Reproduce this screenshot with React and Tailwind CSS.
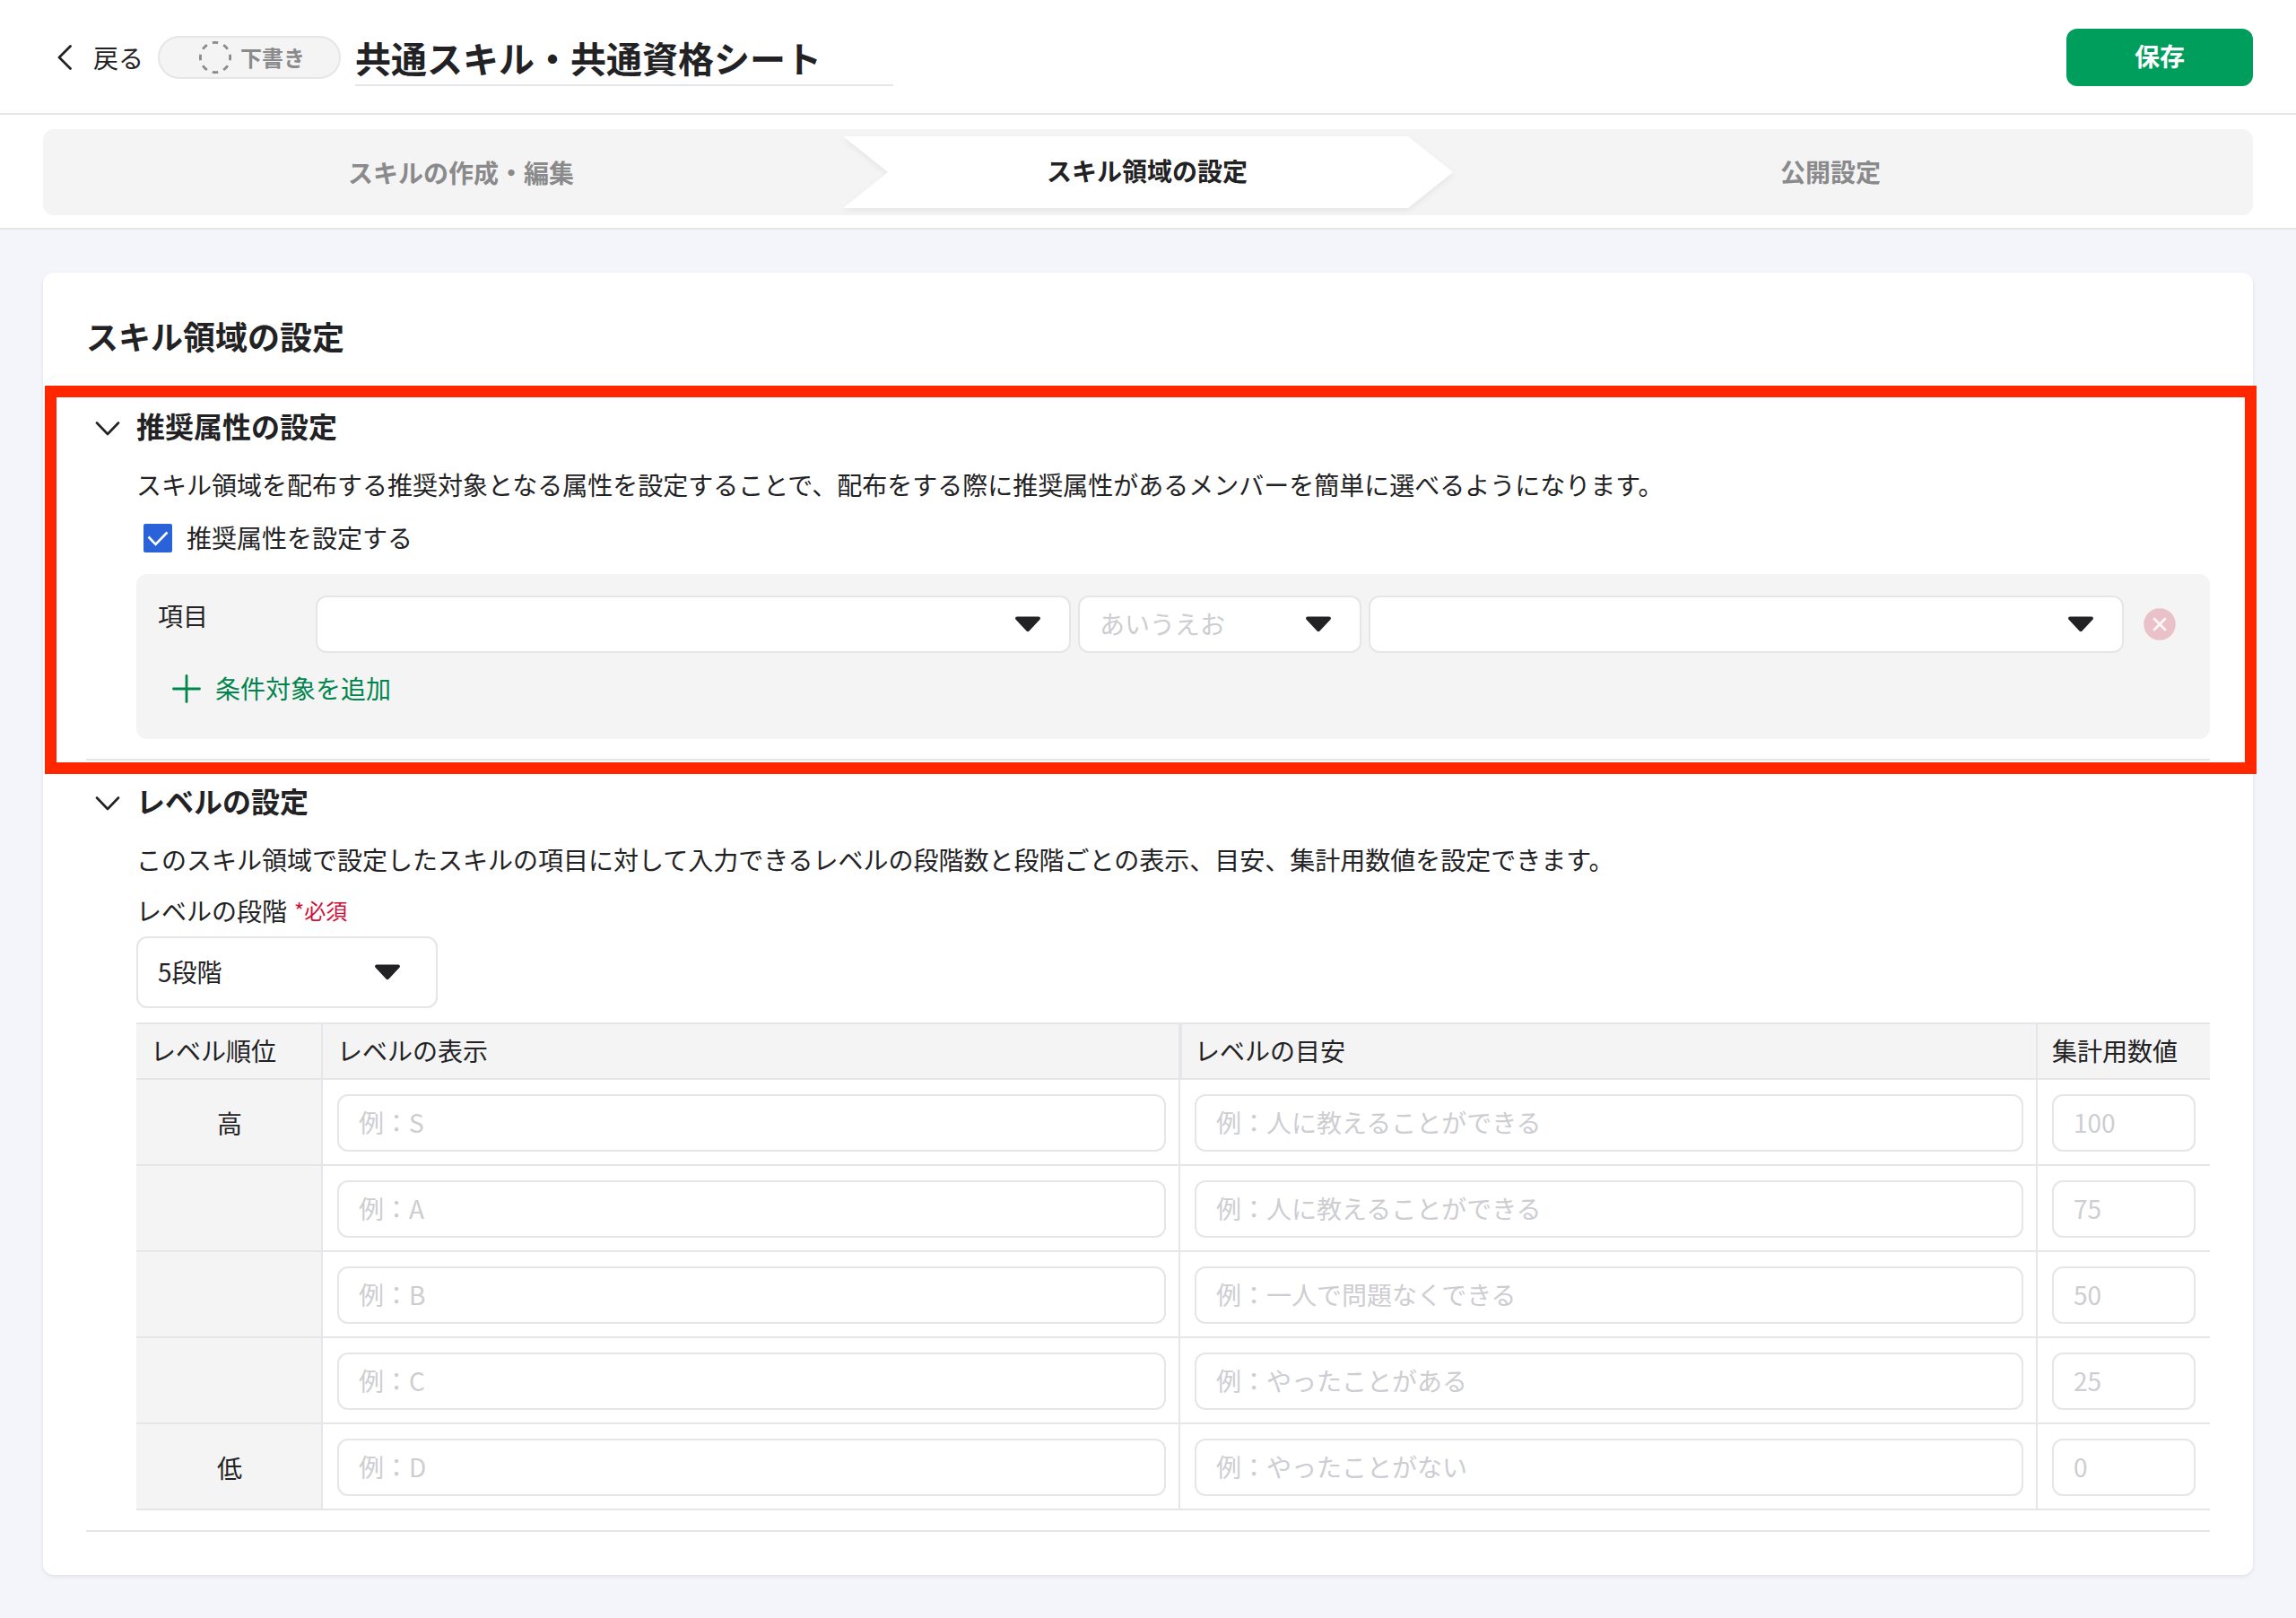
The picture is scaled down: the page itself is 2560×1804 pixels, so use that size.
import React, { useState } from 'react';

const fontStack = "font-['Noto_Sans_CJK_JP',sans-serif]";

const levels = [
  { rank: '高', label: '例：S', guide: '例：人に教えることができる', value: '100' },
  { rank: '', label: '例：A', guide: '例：人に教えることができる', value: '75' },
  { rank: '', label: '例：B', guide: '例：一人で問題なくできる', value: '50' },
  { rank: '', label: '例：C', guide: '例：やったことがある', value: '25' },
  { rank: '低', label: '例：D', guide: '例：やったことがない', value: '0' },
];

const ChevronDown = () => (
  <svg width="28" height="16" viewBox="0 0 28 16" fill="none" stroke="#222224" strokeWidth="2.6" strokeLinecap="round" strokeLinejoin="round" className="mt-1">
    <path d="M2 1.5 14 14 26 1.5" />
  </svg>
);

const Caret = () => (
  <svg width="28" height="18" viewBox="0 0 28 18" fill="#222224" className="shrink-0">
    <path d="M2 0.5h24c1.7 0 2.5 2 1.4 3.2L15.5 16.6c-.8 .9-2.2 .9-3 0L0.6 3.7C-0.5 2.5 0.3 0.5 2 0.5z" />
  </svg>
);

const SelectBox = ({ className, value, placeholder }) => (
  <button className={`flex items-center justify-between rounded-xl border-2 border-[#e5e5ea] bg-white pl-[22px] text-left ${className}`}>
    <span className={value ? 'pb-0.5' : 'pb-0.5 text-[#cdcdd2]'}>{value || placeholder}</span>
    <Caret />
  </button>
);

const TextField = ({ placeholder }) => (
  <input
    placeholder={placeholder}
    className="h-16 w-full rounded-xl border-2 border-[#e5e5ea] bg-white px-[22px] pb-0.5 text-[28px] placeholder:text-[#cdcdd2] outline-none"
  />
);

const SectionTitle = ({ children }) => (
  <div className="flex h-12 items-center pl-[10px]">
    <ChevronDown />
    <h3 className="ml-[18px] pb-1 text-[32px] leading-[44px] font-bold">{children}</h3>
  </div>
);

const Header = () => (
  <header className="flex h-32 items-center border-b-2 border-[#e5e5ea] bg-white pt-0.5 pr-12 pl-16">
    <button className="flex items-center">
      <svg width="16" height="28" viewBox="0 0 16 28" fill="none" stroke="#222224" strokeWidth="2.8" strokeLinecap="round" strokeLinejoin="round">
        <path d="M14.5 1.5 2 14l12.5 12.5" />
      </svg>
      <span className="ml-6">戻る</span>
    </button>
    <div className="ml-4 flex h-12 w-[204px] items-center rounded-full border-2 border-[#e5e5ea] bg-[#f4f4f4] pl-11 text-2xl font-bold text-[#8a8a8c]">
      <svg width="36" height="36" viewBox="0 0 36 36" fill="none" stroke="#8a8a8c" strokeWidth="2.8">
        <circle cx="18" cy="18" r="16.6" pathLength="80" strokeDasharray="5 5" strokeDashoffset="2.5" />
      </svg>
      <span className="ml-2.5">下書き</span>
    </div>
    <div className="ml-4 h-16 w-[600px] border-b-2 border-[#e5e5ea]">
      <h1 className="text-[40px] leading-[64px] font-bold">共通スキル・共通資格シート</h1>
    </div>
    <button className="ml-auto h-16 w-[208px] rounded-xl bg-[#009e5c] pb-1 font-bold text-white">保存</button>
  </header>
);

const Steps = () => (
  <nav className="h-32 border-b-2 border-[#e5e5ea] bg-white px-12 pt-4">
    <div className="flex h-24 items-center rounded-xl bg-[#f4f4f4] text-center font-bold text-[#8a8a8c]">
      <div className="w-[892px] pl-[40px]">スキルの作成・編集</div>
      <div className="relative h-24 w-[680px]">
        {/* current step ribbon */}
        <svg width="680" height="96" viewBox="0 0 680 96" className="absolute inset-0 drop-shadow-[0_3px_3px_rgba(0,0,0,0.06)]">
          <path d="M0 8h630l50 40-50 40H0l50-40z" fill="#fff" />
        </svg>
        <div className="relative pr-0.5 leading-[93px] text-[#222224]">スキル領域の設定</div>
      </div>
      <div className="w-[892px] pr-[50px] pb-[3px]">公開設定</div>
    </div>
  </nav>
);

const RecommendSection = () => {
  const [enabled, setEnabled] = useState(true);

  return (
    <section className="h-[416px] border-b-2 border-[#e5e5ea] pt-5">
      <SectionTitle>推奨属性の設定</SectionTitle>
      <div className="pl-14">
        <p className="mt-[19px]">スキル領域を配布する推奨対象となる属性を設定することで、配布をする際に推奨属性があるメンバーを簡単に選べるようになります。</p>
        <button onClick={() => setEnabled(!enabled)} className="mt-[18px] flex h-[42px] items-center pl-2">
          <span className="flex size-8 items-center justify-center rounded-xs bg-[#2a62d9]">
            {enabled && (
              <svg width="24" height="18" viewBox="0 0 24 18" fill="none" stroke="#fff" strokeWidth="2.6">
                <path d="M1.5 7.5 9.5 15.8 22.5 2.5" />
              </svg>
            )}
          </span>
          <span className="ml-4 pb-0.5">推奨属性を設定する</span>
        </button>
        <div className="mt-[19px] h-[184px] rounded-xl bg-[#f4f4f4] px-6 pt-6">
          <div className="flex">
            <span className="mt-0.5 w-[176px] leading-[40px]">項目</span>
            <div className="flex items-center gap-2">
              <SelectBox className="h-16 w-[842px] pr-8" />
              <SelectBox className="h-16 w-[316px] pr-8" placeholder="あいうえお" />
              <SelectBox className="h-16 w-[842px] pr-8" />
              <button className="ml-[14px]">
                <svg width="36" height="36" viewBox="0 0 36 36" fill="none">
                  <circle cx="18" cy="18" r="17.8" fill="#ebc1c9" />
                  <path d="m12 12 12 12M24 12 12 24" stroke="#fbf7f8" strokeWidth="2.8" strokeLinecap="round" />
                </svg>
              </button>
            </div>
          </div>
          <button className="mt-5 flex items-center pl-4 leading-[38px] text-[#00854d]">
            <svg width="32" height="32" viewBox="0 0 32 32" stroke="currentColor" strokeWidth="2.8" strokeLinecap="round" className="mt-0.5">
              <path d="M16 1.5v29M1.5 16h29" />
            </svg>
            <span className="ml-4">条件対象を追加</span>
          </button>
        </div>
      </div>
    </section>
  );
};

const LevelSection = () => (
  <section className="h-[860px] border-b-2 border-[#e5e5ea] pt-[22px]">
    <SectionTitle>レベルの設定</SectionTitle>
    <div className="pl-14">
      <p className="mt-[19px]">このスキル領域で設定したスキルの項目に対して入力できるレベルの段階数と段階ごとの表示、目安、集計用数値を設定できます。</p>
      <div className="mt-[15px] flex items-center">
        レベルの段階
        <span className="ml-2 text-2xl leading-[42px] text-[#d0103a]">*必須</span>
      </div>
      <SelectBox className="mt-2 h-20 w-[336px] pr-10" value="5段階" />

      <div className="mt-4 border-t-2 border-[#e5e5ea]">
        <div className="grid h-[62px] grid-cols-[208px_956px_956px_192px] border-b-2 border-[#e5e5ea] bg-[#f4f4f4] leading-[59px]">
          <div className="border-r-2 border-[#e5e5ea] pl-4">レベル順位</div>
          <div className="border-r-2 border-[#e5e5ea] pl-4">レベルの表示</div>
          <div className="border-x-2 border-[#e5e5ea] pl-3.5">レベルの目安</div>
          <div className="pl-4">集計用数値</div>
        </div>
        {levels.map((level, index) => (
          <div key={index} className="grid h-24 grid-cols-[208px_956px_956px_192px] border-b-2 border-[#e5e5ea]">
            <div className="flex items-center justify-center border-r-2 border-[#e5e5ea] bg-[#f4f4f4] pt-0.5 pl-0.5">{level.rank}</div>
            <div className="border-r-2 border-[#e5e5ea] pt-4 pr-3.5 pl-4">
              <TextField placeholder={level.label} />
            </div>
            <div className="border-r-2 border-[#e5e5ea] pt-4 pr-3.5 pl-4">
              <TextField placeholder={level.guide} />
            </div>
            <div className="px-4 pt-4">
              <TextField placeholder={level.value} />
            </div>
          </div>
        ))}
      </div>
    </div>
  </section>
);

export default function App() {
  return (
    <div lang="ja" className={`${fontStack} h-[1804px] w-[2560px] overflow-hidden bg-[#f4f5fa] text-[28px] leading-[42px] text-[#222224]`}>
      <Header />
      <Steps />
      <main className="relative mx-12 mt-12 h-[1452px] rounded-xl bg-white px-12 shadow-[0_2px_4px_rgba(0,0,0,0.08)]">
        <h2 className="h-32 border-b-2 border-[#e5e5ea] pt-[43px] text-4xl leading-[54px] font-bold">スキル領域の設定</h2>
        <RecommendSection />
        <LevelSection />
        {/* highlight frame over the recommended attributes section */}
        <div className="pointer-events-none absolute top-[126px] left-[1.5px] h-[433px] w-[2466px] border-[13px] border-[#ff2600]" />
      </main>
    </div>
  );
}
